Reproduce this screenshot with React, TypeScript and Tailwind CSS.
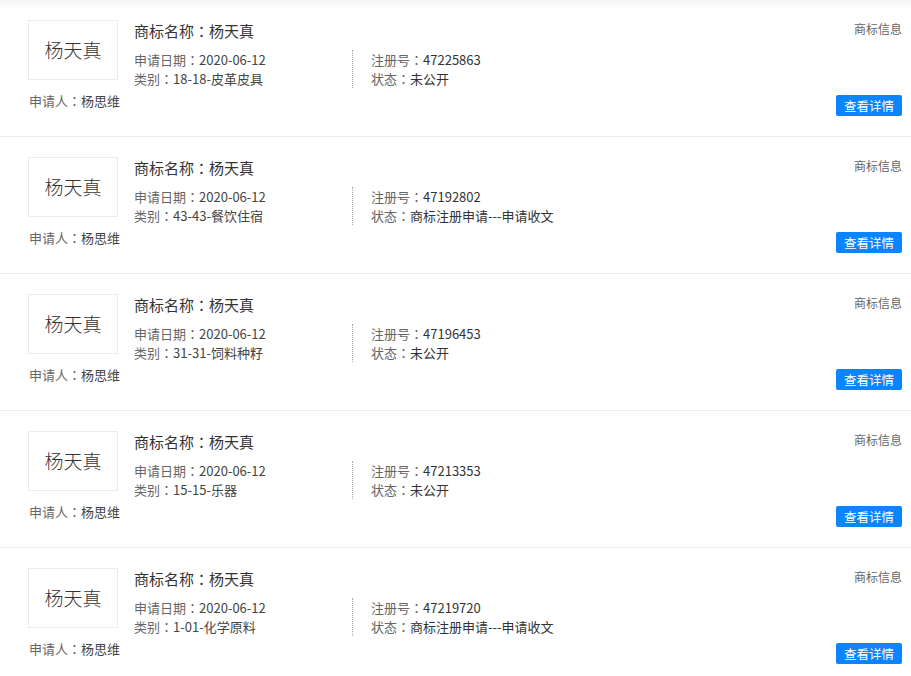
import React from 'react';

interface Trademark {
  name: string;
  date: string;
  regNo: string;
  category: string;
  status: string;
  applicant: string;
}

const items: Trademark[] = [
  { name: '杨天真', date: '2020-06-12', regNo: '47225863', category: '18-18-皮革皮具', status: '未公开', applicant: '杨思维' },
  { name: '杨天真', date: '2020-06-12', regNo: '47192802', category: '43-43-餐饮住宿', status: '商标注册申请---申请收文', applicant: '杨思维' },
  { name: '杨天真', date: '2020-06-12', regNo: '47196453', category: '31-31-饲料种籽', status: '未公开', applicant: '杨思维' },
  { name: '杨天真', date: '2020-06-12', regNo: '47213353', category: '15-15-乐器', status: '未公开', applicant: '杨思维' },
  { name: '杨天真', date: '2020-06-12', regNo: '47219720', category: '1-01-化学原料', status: '商标注册申请---申请收文', applicant: '杨思维' },
];

// full-width colon, centred in a 1em box like the original's font
const Colon = () => (
  <span
    className="inline-block w-[1em] text-center"
    style={{ fontFamily: '"Noto Sans CJK JP", sans-serif' }}
  >
    ：
  </span>
);

const Field: React.FC<{ label: string; value: string; valueClass?: string }> = ({
  label,
  value,
  valueClass = 'text-[#444]',
}) => (
  <div className="whitespace-nowrap">
    {label}
    <Colon />
    <span className={valueClass}>{value}</span>
  </div>
);

const TrademarkRow: React.FC<{ item: Trademark; first?: boolean }> = ({ item, first }) => (
  <div
    className={`flex h-[137px] border-b border-[#e6edf5] pt-[20px] ${
      first ? 'shadow-[inset_0_12px_10px_-10px_rgba(0,0,0,0.07)]' : ''
    }`}
  >
    {/* logo + applicant */}
    <div className="ml-[28px] flex w-[96px] flex-col">
      <div className="flex h-[60px] w-[90px] items-center justify-center border border-[#ebebeb] bg-white">
        <span className="text-[19px] font-light text-[#333]">{item.name}</span>
      </div>
      <div className="mt-[12px] pl-px text-[13px] leading-[18px] text-[#666]">
        <Field label="申请人" value={item.applicant} />
      </div>
    </div>

    {/* info */}
    <div className="ml-[10px] flex-1">
      <div className="whitespace-nowrap pt-px text-[15px] leading-[20px] text-[#333]">
        商标名称<Colon />
        {item.name}
      </div>
      <div className="mt-[9px] flex">
        <div className="w-[218px] text-[13px] leading-[19px] text-[#666]">
          <Field label="申请日期" value={item.date} />
          <Field label="类别" value={item.category} />
        </div>
        <div className="border-l border-dotted border-[#aaa] pl-[18px] text-[13px] leading-[19px] text-[#666]">
          <Field label="注册号" value={item.regNo} valueClass="text-[#333]" />
          <Field label="状态" value={item.status} valueClass="text-[#333]" />
        </div>
      </div>
    </div>

    {/* actions */}
    <div className="flex h-[96px] flex-col items-end justify-between pr-[9px]">
      <div className="pt-px text-[12px] leading-[16px] text-[#666]">商标信息</div>
      <button className="h-[21px] w-[66px] rounded-[2px] bg-[#0a84ff] text-[12.5px] leading-[21px] text-white">
        查看详情
      </button>
    </div>
  </div>
);

export default function App() {
  return (
    <div
      className="min-h-screen w-full bg-white"
      style={{ fontFamily: '"Noto Sans CJK SC", "Noto Sans", sans-serif' }}
    >
      {items.map((item, i) => (
        <TrademarkRow key={item.regNo} item={item} first={i === 0} />
      ))}
    </div>
  );
}
